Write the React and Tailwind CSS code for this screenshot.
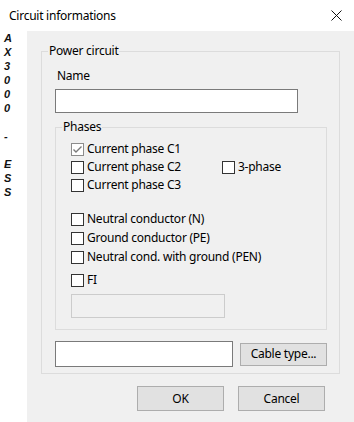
import React from 'react';

const font = { fontFamily: '"Noto Sans", "Open Sans", sans-serif', letterSpacing: '-0.25px' };

const Check = ({ label, checked, muted, className = '' }) => (
  <div className={`flex items-center h-[18px] ${className}`}>
    <span
      className={`w-[13px] h-[13px] border bg-white flex items-center justify-center shrink-0 ${muted ? 'border-[#8c8c8c]' : 'border-[#333333]'}`}
    >
      {checked && (
        <svg width="11" height="11" viewBox="0 0 11 11">
          <path d="M1.5 5.5 L4 8 L9.5 2.5" fill="none" stroke="#7a7a7a" strokeWidth="1.4" />
        </svg>
      )}
    </span>
    <span className="ml-[3px] text-[12px] leading-[16px] text-black">{label}</span>
  </div>
);

const GroupLabel = ({ children, className = '' }) => (
  <span className={`absolute -top-[9px] bg-[#f0f0f0] px-[1px] text-[12px] leading-[16px] text-black ${className}`}>
    {children}
  </span>
);

export default function App() {
  const side = ['A', 'X', '3', '0', '0', '0', '', '-', '', 'E', 'S', 'S'];

  return (
    <div className="w-[354px] h-[422px] bg-white flex flex-col overflow-hidden" style={font}>
      {/* title bar */}
      <div className="h-[31px] flex items-center justify-between pl-[9px] pr-[12px] shrink-0">
        <span className="text-[12px] text-black">Circuit informations</span>
        <svg width="11" height="11" viewBox="0 0 11 11">
          <path d="M0.5 0.5 L10.5 10.5 M10.5 0.5 L0.5 10.5" stroke="#111" strokeWidth="1" />
        </svg>
      </div>

      <div className="flex flex-1">
        {/* vertical product name */}
        <div className="w-[27px] shrink-0 flex flex-col items-start pl-[4px]">
          {side.map((c, i) => (
            <span
              key={i}
              className="h-[14px] leading-[14px] text-[11px] font-bold italic text-[#111]"
              style={{ fontFamily: '"Liberation Sans", Arial, sans-serif', letterSpacing: 0 }}
            >
              {c}
            </span>
          ))}
        </div>

        {/* dialog body */}
        <div className="flex-1 bg-[#f0f0f0] pl-[14px] pt-[20px]">
          <div className="relative w-[299px] h-[323px] border border-[#dcdcdc]">
            <GroupLabel className="left-[6px]">Power circuit</GroupLabel>

            <div className="pl-[15px] pt-[16px] text-[12px] leading-[16px] text-black">Name</div>
            <div className="ml-[13px] mt-[5px] w-[243px] h-[24px] bg-white border border-[#7a7a7a]"></div>

            {/* phases */}
            <div className="relative ml-[13px] mt-[14px] w-[272px] h-[203px] border border-[#dcdcdc] pl-[15px] pt-[12px]">
              <GroupLabel className="left-[6px]">Phases</GroupLabel>
              <Check label="Current phase C1" checked muted />
              <div className="flex">
                <Check label="Current phase C2" className="w-[151px]" />
                <Check label="3-phase" />
              </div>
              <Check label="Current phase C3" />

              <Check label="Neutral conductor (N)" className="mt-[16px]" />
              <Check label="Ground conductor (PE)" className="mt-[1px]" />
              <Check label="Neutral cond. with ground (PEN)" className="mt-[1px]" />

              <Check label="FI" className="mt-[5px]" />
              <div className="mt-[5px] w-[154px] h-[24px] border border-[#cccccc] bg-[#f0f0f0]"></div>
            </div>

            {/* cable */}
            <div className="flex items-center ml-[13px] mt-[11px]">
              <div className="w-[178px] h-[26px] bg-white border border-[#7a7a7a]"></div>
              <button className="ml-[7px] w-[87px] h-[23px] bg-[#e1e1e1] border border-[#adadad] text-[12px] text-black">
                Cable type...
              </button>
            </div>
          </div>

          <div className="flex mt-[12px] pl-[96px] gap-[14px]">
            <button className="w-[87px] h-[25px] bg-[#e1e1e1] border border-[#adadad] text-[12px] text-black">OK</button>
            <button className="w-[87px] h-[25px] bg-[#e1e1e1] border border-[#adadad] text-[12px] text-black">Cancel</button>
          </div>
        </div>
      </div>
    </div>
  );
}
